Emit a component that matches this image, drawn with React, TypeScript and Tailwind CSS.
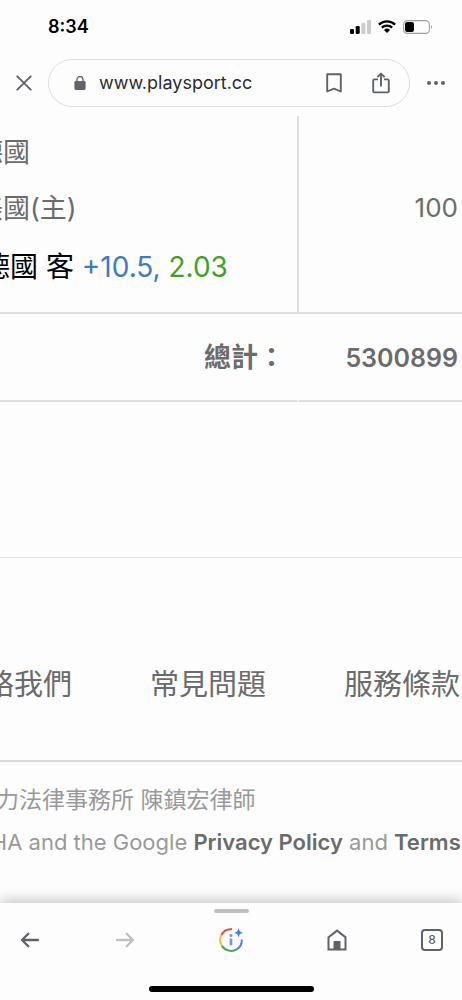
import React from "react";

interface IconProps {
  className?: string;
}

const footerLinks = ["聯絡我們", "常見問題", "服務條款"];

const SignalIcon: React.FC<IconProps> = ({ className }) => (
  <svg viewBox="0 0 21 14" className={className} fill="#000" aria-hidden="true">
    <rect x="0" y="9" width="4" height="5" rx="1.2" />
    <rect x="5.7" y="6" width="4" height="8" rx="1.2" />
    <rect x="11.4" y="3" width="4" height="11" rx="1.2" fill="#cbcbcb" />
    <rect x="17" y="0" width="4" height="14" rx="1.2" fill="#cbcbcb" />
  </svg>
);

const WifiIcon: React.FC<IconProps> = ({ className }) => (
  <svg viewBox="0 0 18 13" className={className} aria-hidden="true">
    <g fill="none" stroke="#000" strokeWidth="2.3">
      <path d="M.9 4.6a11.6 11.6 0 0 1 16.2 0" />
      <path d="M3.8 7.7a7.5 7.5 0 0 1 10.4 0" />
    </g>
    <path d="M9 13 6 10a4.3 4.3 0 0 1 6 0z" fill="#000" />
  </svg>
);

const BatteryIcon: React.FC<IconProps> = ({ className }) => (
  <svg viewBox="0 0 30 14" className={className} aria-hidden="true">
    <rect x=".6" y=".6" width="25.8" height="12.8" rx="3.8" fill="none" stroke="#a0a0a0" strokeWidth="1.1" />
    <rect x="2" y="2" width="9" height="10" rx="2.2" fill="#000" />
    <path d="M28 5v4c1.6-.6 1.6-3.4 0-4z" fill="#a0a0a0" />
  </svg>
);

const CloseIcon: React.FC<IconProps> = ({ className }) => (
  <svg viewBox="0 0 16 16" className={className} fill="none" stroke="#5f6368" strokeWidth="1.9" strokeLinecap="round" aria-hidden="true">
    <path d="M1.3 1.3l13.4 13.4M14.7 1.3L1.3 14.7" />
  </svg>
);

const LockIcon: React.FC<IconProps> = ({ className }) => (
  <svg viewBox="0 0 12 14" className={className} aria-hidden="true">
    <rect x=".4" y="5" width="11.2" height="9" rx="1.4" fill="#5f6368" />
    <path d="M3 5.5V3.6a3 3 0 0 1 6 0v1.9" fill="none" stroke="#5f6368" strokeWidth="1.3" />
  </svg>
);

const BookmarkIcon: React.FC<IconProps> = ({ className }) => (
  <svg viewBox="0 0 16 20" className={className} fill="none" stroke="#5f6368" strokeWidth="1.9" strokeLinejoin="round" aria-hidden="true">
    <path d="M1.2 1.3h13.6v17.2L8 15.6l-6.8 2.9z" />
  </svg>
);

const ShareIcon: React.FC<IconProps> = ({ className }) => (
  <svg viewBox="0 0 18 22" className={className} fill="none" stroke="#5f6368" strokeWidth="1.9" strokeLinejoin="round" aria-hidden="true">
    <path d="M6 7.4H2.4a1.2 1.2 0 0 0-1.2 1.2v10.6a1.2 1.2 0 0 0 1.2 1.2h13.2a1.2 1.2 0 0 0 1.2-1.2V8.6a1.2 1.2 0 0 0-1.2-1.2H12" />
    <path d="M9 14.5V2M5.4 5.2 9 1.6l3.6 3.6" />
  </svg>
);

const MoreIcon: React.FC<IconProps> = ({ className }) => (
  <svg viewBox="0 0 18 4" className={className} fill="#5f6368" aria-hidden="true">
    <circle cx="2" cy="2" r="2" />
    <circle cx="9" cy="2" r="2" />
    <circle cx="16" cy="2" r="2" />
  </svg>
);

const ArrowIcon: React.FC<IconProps> = ({ className }) => (
  <svg viewBox="0 0 24 24" className={className} fill="none" stroke="currentColor" strokeWidth="2.3" strokeLinecap="round" strokeLinejoin="round" aria-hidden="true">
    <path d="M20 12H4.5M10.3 5.7 4 12l6.3 6.3" />
  </svg>
);

const DiscoverIcon: React.FC<IconProps> = ({ className }) => (
  <svg viewBox="0 0 26 26" className={className} fill="none" strokeWidth="2" aria-hidden="true">
    <path d="M3.4 8A10.8 10.8 0 0 1 14 2.3" stroke="#dd4b3e" />
    <path d="M3.9 18.7A10.8 10.8 0 0 1 3.4 8" stroke="#f5bd2f" />
    <path d="M18.7 22.3A10.8 10.8 0 0 1 3.9 18.7" stroke="#4ba457" />
    <path d="M23.8 12.5A10.8 10.8 0 0 1 18.7 22.3" stroke="#4a80ec" />
    <path d="M13 11.6v6.8" stroke="#6a94f0" strokeWidth="2.6" />
    <circle cx="13" cy="8.4" r="1.5" fill="#6a94f0" />
    <path d="M20.6.9c.8 3.200 1.600 4 4.800 4.800-3.200.8-4 1.600-4.800 4.800-.8-3.200-1.600-4-4.800-4.800 3.200-.8 4-1.600 4.800-4.800z" fill="#4a80ec" />
  </svg>
);

const HomeIcon: React.FC<IconProps> = ({ className }) => (
  <svg viewBox="0 0 20 22" className={className} aria-hidden="true">
    <path d="M1.5 8.2 10 1.6l8.500 6.600v12.300h-17z" fill="none" stroke="#5f6368" strokeWidth="2" />
    <path d="M6.500 12h7v8.500h-7z" fill="#5f6368" />
  </svg>
);

const StatusBar = () => (
  <div className="flex h-[53px] shrink-0 items-center justify-between pr-[29px] pl-12">
    <span className="text-lg font-semibold text-black">8:34</span>
    <div className="flex items-center gap-[7px]">
      <SignalIcon className="h-[14px] w-[21px]" />
      <WifiIcon className="h-[13px] w-[18px]" />
      <BatteryIcon className="h-[14px] w-[30px]" />
    </div>
  </div>
);

const AddressBar = () => (
  <div className="flex shrink-0 items-center pt-[6px] pr-[14px] pl-3">
    <button type="button" aria-label="Close" className="flex size-6 items-center justify-center">
      <CloseIcon className="size-4" />
    </button>
    <div className="ml-3 flex h-12 min-w-0 flex-1 items-center rounded-full border border-[#dddde0] pr-4 pl-[25px]">
      <LockIcon className="h-[14px] w-3 shrink-0" />
      <input
        type="text"
        aria-label="Address"
        defaultValue="www.playsport.cc"
        className="ml-[13px] min-w-0 flex-1 bg-transparent text-lg text-[#2c2c2e] outline-none"
      />
      <button type="button" aria-label="Bookmark" className="flex size-6 items-center justify-center">
        <BookmarkIcon className="h-5 w-4" />
      </button>
      <button type="button" aria-label="Share" className="ml-[23px] flex size-6 items-center justify-center">
        <ShareIcon className="h-[22px] w-[18px]" />
      </button>
    </div>
    <button type="button" aria-label="More" className="ml-[14px] flex size-6 items-center justify-center">
      <MoreIcon className="h-1 w-[18px]" />
    </button>
  </div>
);

const BetTable = () => (
  <table className="w-full table-fixed border-separate border-spacing-0 text-[#6b6b6b]">
    <tbody>
      <tr>
        <td className="w-[299px] overflow-hidden border-r-2 border-b-2 border-[#dedede] p-0 pt-[9px] pb-[15px] align-top whitespace-nowrap">
          <div className="-ml-6 text-[27px] leading-[56px]">
            <p>德國</p>
            <p>美國(主)</p>
          </div>
          <p className="-ml-[18px] text-[28px] leading-[60px] text-black">
            德國 客 <span className="text-[#3b7cc4]">+10.5,</span>{" "}
            <span className="text-[#43a027]">2.03</span>
          </p>
        </td>
        <td className="border-b-2 border-[#dedede] p-0 pr-1 pb-[14px] text-right text-[26px]">100</td>
      </tr>
      <tr className="font-semibold">
        <th scope="row" className="h-[88px] border-r-2 border-b-2 border-r-transparent border-b-[#dedede] p-0 pt-[3px] pr-3 text-right text-[27px] font-semibold">
          總計：
        </th>
        <td className="border-b-2 border-[#dedede] p-0 pt-[3px] pr-1 text-right text-[25px]">5300899</td>
      </tr>
    </tbody>
  </table>
);

const SiteFooter = () => (
  <footer className="mt-[155px] border-t border-[#e2e2e2] whitespace-nowrap">
    <nav className="-ml-11 flex h-[202px] items-center gap-[78px] pt-[52px] text-[29px] text-[#6b6b6b]">
      {footerLinks.map((label) => (
        <a key={label} href="#" className="shrink-0">
          {label}
        </a>
      ))}
    </nav>
    <div className="border-t-2 border-[#dadada] pt-[17px] text-[#999]">
      <p className="-ml-1 text-[23px] leading-[42px]">力法律事務所 陳鎮宏律師</p>
      <p className="-ml-[136px] text-[22px] leading-[42px]">
        by reCAPTCHA and the Google{" "}
        <a href="#" className="font-semibold text-[#6b6b6b]">Privacy Policy</a> and{" "}
        <a href="#" className="font-semibold text-[#6b6b6b]">Terms</a>
      </p>
    </div>
  </footer>
);

const BottomBar = () => (
  <div className="shrink-0 bg-[#fdfdfd] pb-2 shadow-[0_-3px_12px_0_rgba(0,0,0,0.22)]">
    <div className="mx-auto mt-[6px] h-1 w-[35px] rounded-full bg-[#bdc1c6]" />
    <div className="mt-[14px] flex items-center justify-between px-[18px]">
      <div className="flex gap-[71px]">
        <button type="button" aria-label="Back" className="size-6 text-[#5f6368]">
          <ArrowIcon className="size-6" />
        </button>
        <button type="button" aria-label="Forward" disabled className="size-6 text-[#bdc1c6]">
          <ArrowIcon className="size-6 rotate-180" />
        </button>
      </div>
      <button type="button" aria-label="Discover">
        <DiscoverIcon className="size-[26px]" />
      </button>
      <div className="flex items-center gap-[71px]">
        <button type="button" aria-label="Home" className="flex size-6 items-center justify-center">
          <HomeIcon className="h-[22px] w-5" />
        </button>
        <button type="button" aria-label="8 open tabs" className="flex size-6 items-center justify-center">
          <span className="flex size-[22px] items-center justify-center rounded-[4px] border-2 border-[#5f6368] text-xs font-medium text-[#5f6368]">
            8
          </span>
        </button>
      </div>
    </div>
    <div className="mx-auto mt-[33px] h-[6px] w-[165px] rounded-full bg-black" />
  </div>
);

export default function App() {
  return (
    <div className="flex min-h-screen flex-col overflow-hidden bg-[#fdfdfd] font-['Inter','Noto_Sans_CJK_TC',sans-serif]">
      <StatusBar />
      <AddressBar />
      <main className="mt-[9px] flex-1 overflow-hidden">
        <BetTable />
        <SiteFooter />
      </main>
      <BottomBar />
    </div>
  );
}
